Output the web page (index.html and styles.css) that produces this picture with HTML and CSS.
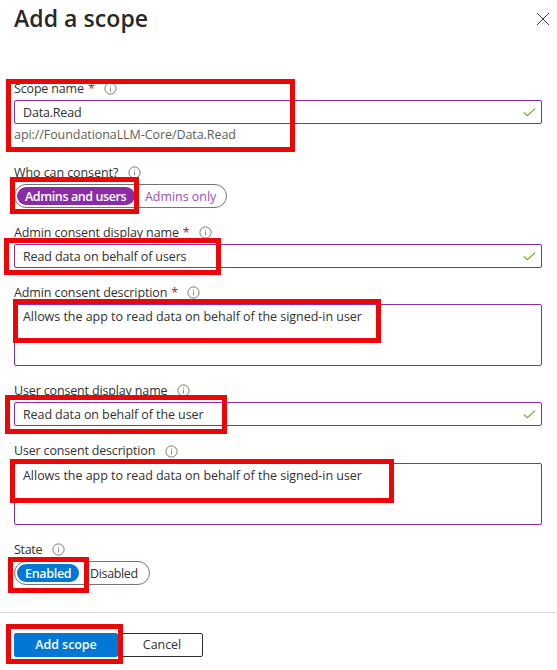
FILE: index.html
```html
<!DOCTYPE html>
<html lang="en">
<head>
<meta charset="utf-8">
<title>Add a scope</title>
<link rel="stylesheet" href="styles.css">
</head>
<body>
<svg width="0" height="0" class="defs">
  <symbol id="info" viewBox="0 0 13 13"><circle cx="6.5" cy="6.5" r="5.6" fill="none" stroke="#7a7978"/><path d="M6.5 5.5V9.5M6.5 3.5V4.5" stroke="#8a8988" fill="none"/></symbol>
  <symbol id="check" viewBox="0 0 13 9"><path d="M.7 4.4 4.3 7.8 12.2 .6" fill="none" stroke="#6bb02c" stroke-width="1.2"/></symbol>
</svg>
<main class="panel">
  <header class="header">
    <h1>Add a scope</h1>
    <svg class="close" viewBox="0 0 12 12"><path d="M0 0 12 12M12 0 0 12" stroke="#3b3a39" fill="none"/></svg>
  </header>
  <section class="field scope">
    <div class="label"><span class="t-scope">Scope name</span><b>*</b><svg><use href="#info"/></svg></div>
    <div class="input"><span class="t-data">Data.Read</span><svg><use href="#check"/></svg></div>
    <div class="hint"><span class="t-hint">api://FoundationaLLM-Core/Data.Read</span></div>
  </section>
  <section class="field who">
    <div class="label"><span class="t-who">Who can consent?</span><svg><use href="#info"/></svg></div>
    <div class="toggle purple"><span class="on">Admins and users</span><span class="off">Admins only</span></div>
  </section>
  <section class="field admin-name">
    <div class="label"><span class="t-adn">Admin consent display name</span><b>*</b><svg><use href="#info"/></svg></div>
    <div class="input"><span class="t-users">Read data on behalf of users</span><svg><use href="#check"/></svg></div>
  </section>
  <section class="field admin-desc">
    <div class="label"><span class="t-adesc">Admin consent description</span><b>*</b><svg><use href="#info"/></svg></div>
    <div class="input area"><span class="t-allow">Allows the app to read data on behalf of the signed-in user</span></div>
  </section>
  <section class="field user-name">
    <div class="label"><span class="t-udn">User consent display name</span><svg><use href="#info"/></svg></div>
    <div class="input"><span class="t-user">Read data on behalf of the user</span><svg><use href="#check"/></svg></div>
  </section>
  <section class="field user-desc">
    <div class="label"><span class="t-udesc">User consent description</span><svg><use href="#info"/></svg></div>
    <div class="input area"><span class="t-allow">Allows the app to read data on behalf of the signed-in user</span></div>
  </section>
  <section class="field state">
    <div class="label"><span class="t-state">State</span><svg><use href="#info"/></svg></div>
    <div class="toggle blue"><span class="on">Enabled</span><span class="off">Disabled</span></div>
  </section>
  <footer class="footer">
    <button class="primary">Add scope</button>
    <button class="secondary">Cancel</button>
  </footer>
  <i class="mark m1"></i><i class="mark m2"></i><i class="mark m3"></i><i class="mark m4"></i>
  <i class="mark m5"></i><i class="mark m6"></i><i class="mark m7"></i><i class="mark m8"></i>
</main>
</body>
</html>
```
FILE: styles.css
```css
* { box-sizing: border-box; }
body { margin: 0; background: #fff; color: #323130; font: 12.5px/18px "Open Sans", "Noto Sans", sans-serif; }
.defs { position: absolute; }
.panel { position: relative; width: 557px; height: 670px; overflow: hidden; white-space: nowrap; }
.header { height: 76px; padding: 0 8px 0 14px; display: flex; justify-content: space-between; align-items: flex-start; }
h1 { margin: 2px 0 0; font-size: 23px; line-height: 32px; font-weight: 600; letter-spacing: .07px; color: #292827; }
.close { width: 12px; height: 12px; margin-top: 13px; overflow: visible; }
.field { width: 528px; margin-left: 14px; }
.scope { height: 84px; }
.who, .admin-name { height: 60px; }
.admin-desc { height: 98px; }
.user-name { height: 61px; }
.user-desc { height: 98px; }
.state { height: 75px; }
.label { height: 24px; display: flex; align-items: center; }
.label span, .label b, .input span { padding-top: 2px; }
.user-desc .label span { padding-top: 0; }
.label b { margin-left: 4px; width: 6px; font-weight: 400; color: #a4262c; }
.label svg { width: 13px; height: 13px; margin-left: 10px; }
.input { height: 24px; padding: 0 5px 0 8px; border: 1px solid #8a2da5; border-radius: 2px; display: flex; justify-content: space-between; align-items: center; }
.input svg { width: 13px; height: 9px; }
.area { height: 62px; align-items: flex-start; padding-top: 1px; }
.hint { height: 20px; line-height: 22px; color: #605e5c; }
.t-scope { letter-spacing: -.16px; }
.t-data { letter-spacing: -.18px; }
.t-hint { letter-spacing: -.07px; }
.t-who { letter-spacing: -.08px; }
.t-adn { letter-spacing: -.12px; }
.t-adesc { letter-spacing: -.11px; }
.t-users { letter-spacing: -.12px; }
.t-allow { letter-spacing: -.03px; }
.t-udn { letter-spacing: -.15px; }
.t-user { letter-spacing: -.09px; }
.t-udesc { letter-spacing: -.17px; }
.t-state { letter-spacing: -.3px; }
.toggle { height: 24px; border: 1px solid #757473; border-radius: 12px; display: flex; align-items: center; padding-left: 2px; }
.toggle .on { height: 18px; line-height: 20px; border-radius: 9px; color: #fff; padding-left: 8px; font-weight: 600; }
.toggle .off { padding-top: 2px; }
.purple { width: 213px; }
.purple .on { width: 118px; background: #8a2da5; letter-spacing: -.4px; }
.purple .off { margin-left: 10px; color: #a04cb8; letter-spacing: -.05px; }
.blue { width: 136px; }
.blue .on { width: 62px; background: #0078d4; letter-spacing: -.3px; }
.blue .off { margin-left: 11px; letter-spacing: -.35px; }
.footer { border-top: 1px solid #dcdbda; height: 58px; padding: 20px 0 0 14px; display: flex; align-items: flex-start; gap: 3px; }
button { height: 24px; padding: 0; font: inherit; border-radius: 2px; border: 1px solid #323130; background: #fff; color: #323130; }
.primary { width: 104px; border-color: #0078d4; background: #0078d4; color: #fff; font-weight: 600; letter-spacing: -.05px; }
.secondary { width: 82px; letter-spacing: -.05px; }
.mark { position: absolute; border: 5px solid #ec0606; }
.m1 { left: 6px; top: 79px; width: 289px; height: 73px; }
.m2 { left: 10px; top: 177px; width: 129px; height: 37px; }
.m3 { left: 4px; top: 238px; width: 217px; height: 37px; }
.m4 { left: 13px; top: 299px; width: 368px; height: 44px; }
.m5 { left: 5px; top: 395px; width: 222px; height: 39px; }
.m6 { left: 10px; top: 459px; width: 384px; height: 44px; }
.m7 { left: 8px; top: 557px; width: 81px; height: 36px; }
.m8 { left: 6px; top: 624px; width: 117px; height: 40px; }
```
